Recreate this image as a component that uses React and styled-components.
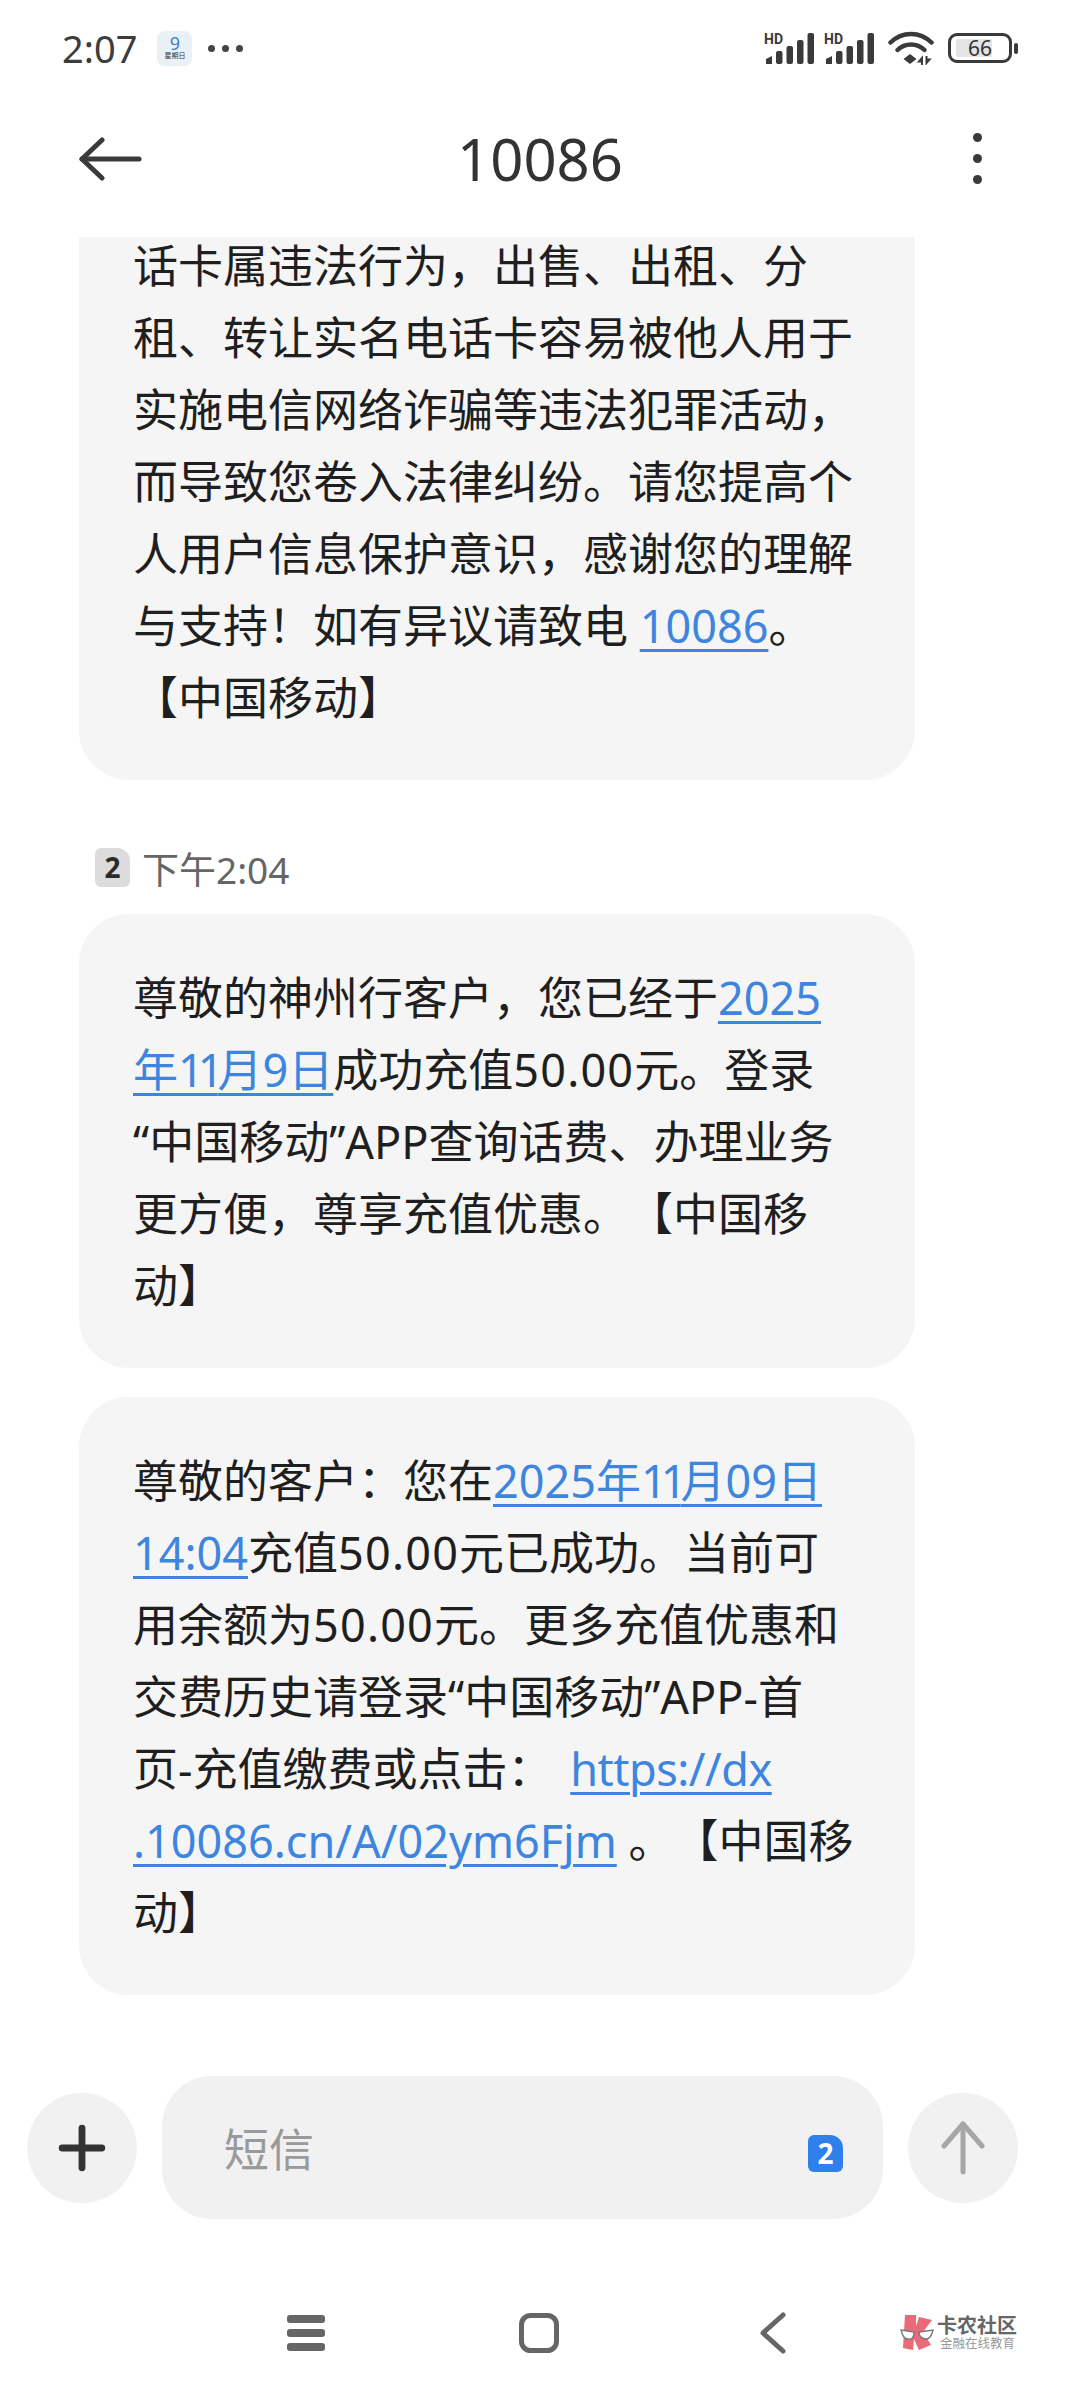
import styled, { createGlobalStyle } from 'styled-components';
import { Plus } from 'lucide-react';

const GlobalStyle = createGlobalStyle`
    html, body {
        margin: 0;
        padding: 0;
        background: #fff;
    }
    * {
        box-sizing: border-box;
    }
`;

const FONT = `"Noto Sans", "Noto Sans CJK SC", sans-serif`;

function SignalIcon() {
    return (
        <svg width="50" height="33" viewBox="0 0 50 33">
            <text x="0" y="11.5" fontSize="14" fontWeight="700" fontFamily="Roboto, sans-serif" fill="#3a3a3a">HD</text>
            <g fill="#3a3a3a">
                <path d="M2 32v-5l6-3v8z" />
                <rect x="12" y="19" width="6.5" height="13" rx="2" />
                <rect x="22.5" y="14" width="6.5" height="18" rx="2" />
                <rect x="33" y="8" width="6.5" height="24" rx="2" />
                <rect x="43.5" y="1" width="6.5" height="31" rx="2" />
            </g>
        </svg>
    );
}

function WifiIcon() {
    return (
        <svg width="46" height="34" viewBox="0 0 46 34">
            <g fill="none" stroke="#3a3a3a" strokeWidth="4.5" strokeLinecap="round">
                <path d="M2.5 11.5C14 0 32 0 43.5 11.5" />
                <path d="M9.5 19C17 11.5 29 11.5 36.5 19" />
            </g>
            <path d="M22 23l6.5 5-6.5 5-6.5-5z" fill="#3a3a3a" />
            <path d="M34 34v-7l-3 3.5h3M38.5 25v7l3-3.5h-3" fill="#3a3a3a" stroke="#3a3a3a" strokeWidth="2" />
        </svg>
    );
}

function BackArrow() {
    return (
        <svg width="64" height="44" viewBox="0 0 64 44" fill="none" stroke="#3a3a3a" strokeWidth="5" strokeLinecap="round" strokeLinejoin="round">
            <path d="M4 22H61" />
            <path d="M24 3L4 22l20 19" />
        </svg>
    );
}

function SendArrow() {
    return (
        <svg width="44" height="54" viewBox="0 0 44 54" fill="none" stroke="#a6a6a6" strokeWidth="5" strokeLinecap="round" strokeLinejoin="round">
            <path d="M22 3V51" />
            <path d="M3 25L22 3l19 22" />
        </svg>
    );
}

function MenuIcon() {
    return (
        <svg width="38" height="36" viewBox="0 0 38 36" fill="#666">
            <rect y="0" width="38" height="8" rx="3" />
            <rect y="14" width="38" height="8" rx="3" />
            <rect y="28" width="38" height="8" rx="3" />
        </svg>
    );
}

function HomeIcon() {
    return (
        <svg width="40" height="40" viewBox="0 0 40 40" fill="none" stroke="#666" strokeWidth="5">
            <rect x="2.5" y="2.5" width="35" height="35" rx="9" />
        </svg>
    );
}

function BackIcon() {
    return (
        <svg width="34" height="42" viewBox="0 0 34 42" fill="none" stroke="#666" strokeWidth="5" strokeLinecap="round" strokeLinejoin="round">
            <path d="M30 3L10 21l20 18" />
        </svg>
    );
}

function WatermarkMark() {
    return (
        <svg width="34" height="36" viewBox="0 0 34 36">
            <path d="M5 0h11v11l3-9 13 3-9 12 8 13-12 5-5-11-1 11-10-2z" fill="#e96a78" />
            <g fill="#fff" stroke="#777" strokeWidth="1.3">
                <path d="M1 15l13 2c0 5-2 8-6 7-4 0-6-4-7-9z" />
                <path d="M19 17l14-2c-1 5-3 9-7 9s-7-3-7-7z" />
            </g>
        </svg>
    );
}

function Line({ children }) {
    return <TextLine>{children}</TextLine>;
}

export default function App() {
    return (
        <Page>
            <GlobalStyle />
            <StatusBar>
                <StatusLeft>
                    <Clock>2:07</Clock>
                    <CalendarTile>
                        <span>9</span>
                        <small>星期日</small>
                    </CalendarTile>
                    <Dots>
                        <i /><i /><i />
                    </Dots>
                </StatusLeft>
                <StatusRight>
                    <SignalGroup>
                        <SignalIcon />
                        <SignalIcon />
                    </SignalGroup>
                    <WifiIcon />
                    <Battery>
                        <BatteryBody>
                            <BatteryLevel>66</BatteryLevel>
                        </BatteryBody>
                        <BatteryCap />
                    </Battery>
                </StatusRight>
            </StatusBar>

            <Header>
                <BackArrow />
                <Title>10086</Title>
                <MoreButton>
                    <i /><i /><i />
                </MoreButton>
            </Header>

            <MessageList>
                <Bubble>
                    <Line>话卡属违法行为，出售、出租、分</Line>
                    <Line>租、转让实名电话卡容易被他人用于</Line>
                    <Line>实施电信网络诈骗等违法犯罪活动，</Line>
                    <Line>而导致您卷入法律纠纷。请您提高个</Line>
                    <Line>人用户信息保护意识，感谢您的理解</Line>
                    <Line>与支持！如有异议请致电 <MsgLink>10086</MsgLink>。</Line>
                    <Line>【中国移动】</Line>
                </Bubble>
                <TimeRow>
                    <SimBadge>2</SimBadge>
                    <TimeText>下午2:04</TimeText>
                </TimeRow>
                <Bubble>
                    <Line>尊敬的神州行客户，您已经于<MsgLink>2025</MsgLink></Line>
                    <Line><MsgLink>年<One>11</One>月9日</MsgLink>成功充值<Amount>50.00</Amount>元。登录</Line>
                    <Line>“中国移动”APP查询话费、办理业务</Line>
                    <Line>更方便，尊享充值优惠。【中国移</Line>
                    <Line>动】</Line>
                </Bubble>
                <Bubble>
                    <Line>尊敬的客户：您在<MsgLink>2025年<One>11</One>月09日</MsgLink></Line>
                    <Line><MsgLink>14:04</MsgLink>充值<Amount>50.00</Amount>元已成功。当前可</Line>
                    <Line>用余额为<Amount>50.00</Amount>元。更多充值优惠和</Line>
                    <Line>交费历史请登录“中国移动”APP-首</Line>
                    <Line>页-充值缴费或点击： <UrlLink>https://dx</UrlLink></Line>
                    <Line><MsgLink>.10086.cn/A/02ym6Fjm</MsgLink> 。【中国移</Line>
                    <Line>动】</Line>
                </Bubble>
            </MessageList>

            <Composer>
                <RoundButton>
                    <Plus size={68} color="#333" strokeWidth={2.4} />
                </RoundButton>
                <InputPill>
                    <Placeholder>短信</Placeholder>
                    <SimBadge $active>2</SimBadge>
                </InputPill>
                <RoundButton>
                    <SendArrow />
                </RoundButton>
            </Composer>

            <NavBar>
                <NavIcons>
                    <MenuIcon />
                    <HomeIcon />
                    <BackIcon />
                </NavIcons>
                <Watermark>
                    <WatermarkMark />
                    <WatermarkText>
                        <strong>卡农社区</strong>
                        <span>金融在线教育</span>
                    </WatermarkText>
                </Watermark>
            </NavBar>
        </Page>
    );
}

const Page = styled.div`
    width: 1080px;
    height: 2400px;
    display: flex;
    flex-direction: column;
    overflow: hidden;
    background: #fff;
    font-family: ${FONT};
    color: #333;
`;

const StatusBar = styled.div`
    height: 96px;
    flex-shrink: 0;
    padding: 0 62px 0 62px;
    display: flex;
    align-items: center;
    justify-content: space-between;
`;

const StatusLeft = styled.div`
    display: flex;
    align-items: center;
`;

const Clock = styled.div`
    font-size: 38px;
    color: #3c3c3c;
`;

const CalendarTile = styled.div`
    width: 35px;
    height: 35px;
    margin-left: 20px;
    padding-top: 4px;
    border-radius: 8px;
    background: #eaf1f6;
    display: flex;
    flex-direction: column;
    align-items: center;
    span {
        font-size: 18px;
        line-height: 17px;
        color: #3f7fc4;
    }
    small {
        font-size: 7px;
        line-height: 8px;
        color: #333;
        white-space: nowrap;
    }
`;

const Dots = styled.div`
    margin-left: 16px;
    display: flex;
    gap: 7px;
    i {
        width: 7px;
        height: 7px;
        border-radius: 50%;
        background: #444;
    }
`;

const StatusRight = styled.div`
    display: flex;
    align-items: center;
    gap: 14px;
`;

const SignalGroup = styled.div`
    display: flex;
    gap: 10px;
`;

const Battery = styled.div`
    display: flex;
    align-items: center;
    gap: 2px;
`;

const BatteryBody = styled.div`
    width: 64px;
    height: 30px;
    border: 3px solid #3a3a3a;
    border-radius: 9px;
    padding: 3px 0 3px 5px;
    display: flex;
`;

const BatteryLevel = styled.div`
    width: 36px;
    background: #e4e4e4;
    border-radius: 2px;
    font-size: 21px;
    line-height: 18px;
    text-align: right;
    color: #333;
`;

const BatteryCap = styled.div`
    width: 4px;
    height: 11px;
    border-radius: 2px;
    background: #3a3a3a;
`;

const Header = styled.div`
    height: 141px;
    flex-shrink: 0;
    padding: 0 96px 16px 78px;
    display: flex;
    align-items: center;
    justify-content: space-between;
`;

const Title = styled.div`
    font-size: 58px;
    line-height: 1;
    color: #333;
    margin-right: 34px;
`;

const MoreButton = styled.div`
    width: 12px;
    display: flex;
    flex-direction: column;
    align-items: center;
    gap: 12px;
    i {
        width: 9px;
        height: 9px;
        border-radius: 50%;
        background: #3a3a3a;
    }
`;

const MessageList = styled.div`
    flex: 1;
    min-height: 0;
    overflow: hidden;
    padding: 0 165px 81px 79px;
    display: flex;
    flex-direction: column;
    justify-content: flex-end;
`;

const Bubble = styled.div`
    flex-shrink: 0;
    padding: 48px 20px 46px 54px;
    background: #f5f5f6;
    border-radius: 50px;
    & + & {
        margin-top: 29px;
    }
`;

const TextLine = styled.div`
    font-size: 45px;
    line-height: 72px;
    height: 72px;
    color: #1f1f1f;
    white-space: pre;
    text-spacing-trim: space-all;
`;

const MsgLink = styled.span`
    color: #3d85de;
    text-decoration: underline;
    text-decoration-thickness: 3px;
    text-underline-offset: 6px;
`;

const UrlLink = styled(MsgLink)`
    margin-left: 6px;
    letter-spacing: -0.5px;
`;

const One = styled.span`
    letter-spacing: -6px;
`;

const Amount = styled.span`
    letter-spacing: 1.2px;
`;

const TimeRow = styled.div`
    height: 134px;
    flex-shrink: 0;
    padding: 41px 0 0 16px;
    display: flex;
    align-items: center;
    gap: 12px;
`;

const SimBadge = styled.div`
    width: 35px;
    height: ${p => (p.$active ? '37px' : '39px')};
    margin-top: ${p => (p.$active ? '12px' : '0')};
    border-radius: 6px 13px 6px 6px;
    background: ${p => (p.$active ? '#2f80ed' : '#dcdcdc')};
    color: ${p => (p.$active ? '#fff' : '#2b2b2b')};
    font-size: 28px;
    font-weight: 700;
    line-height: ${p => (p.$active ? '37px' : '39px')};
    text-align: center;
`;

const TimeText = styled.div`
    font-size: 37px;
    color: #666;
`;

const Composer = styled.div`
    height: 143px;
    flex-shrink: 0;
    padding: 0 62px 0 27px;
    display: flex;
    align-items: center;
    gap: 25px;
`;

const RoundButton = styled.div`
    width: 110px;
    height: 110px;
    flex-shrink: 0;
    border-radius: 50%;
    background: #f1f1f1;
    display: flex;
    align-items: center;
    justify-content: center;
`;

const InputPill = styled.div`
    flex: 1;
    height: 143px;
    padding: 0 40px 0 62px;
    border-radius: 50px;
    background: #f1f1f1;
    display: flex;
    align-items: center;
    justify-content: space-between;
`;

const Placeholder = styled.div`
    font-size: 45px;
    color: #9a9a9a;
`;

const NavBar = styled.div`
    height: 181px;
    flex-shrink: 0;
    padding: 46px 63px 0 287px;
    display: flex;
    align-items: center;
    justify-content: space-between;
`;

const NavIcons = styled.div`
    display: flex;
    align-items: center;
    gap: 194px;
`;

const Watermark = styled.div`
    display: flex;
    align-items: center;
    gap: 3px;
`;

const WatermarkText = styled.div`
    display: flex;
    flex-direction: column;
    strong {
        font-size: 20px;
        line-height: 21px;
        color: #666;
        white-space: nowrap;
    }
    span {
        font-size: 12.5px;
        line-height: 15px;
        color: #999;
        white-space: nowrap;
        margin-left: 3px;
    }
`;
